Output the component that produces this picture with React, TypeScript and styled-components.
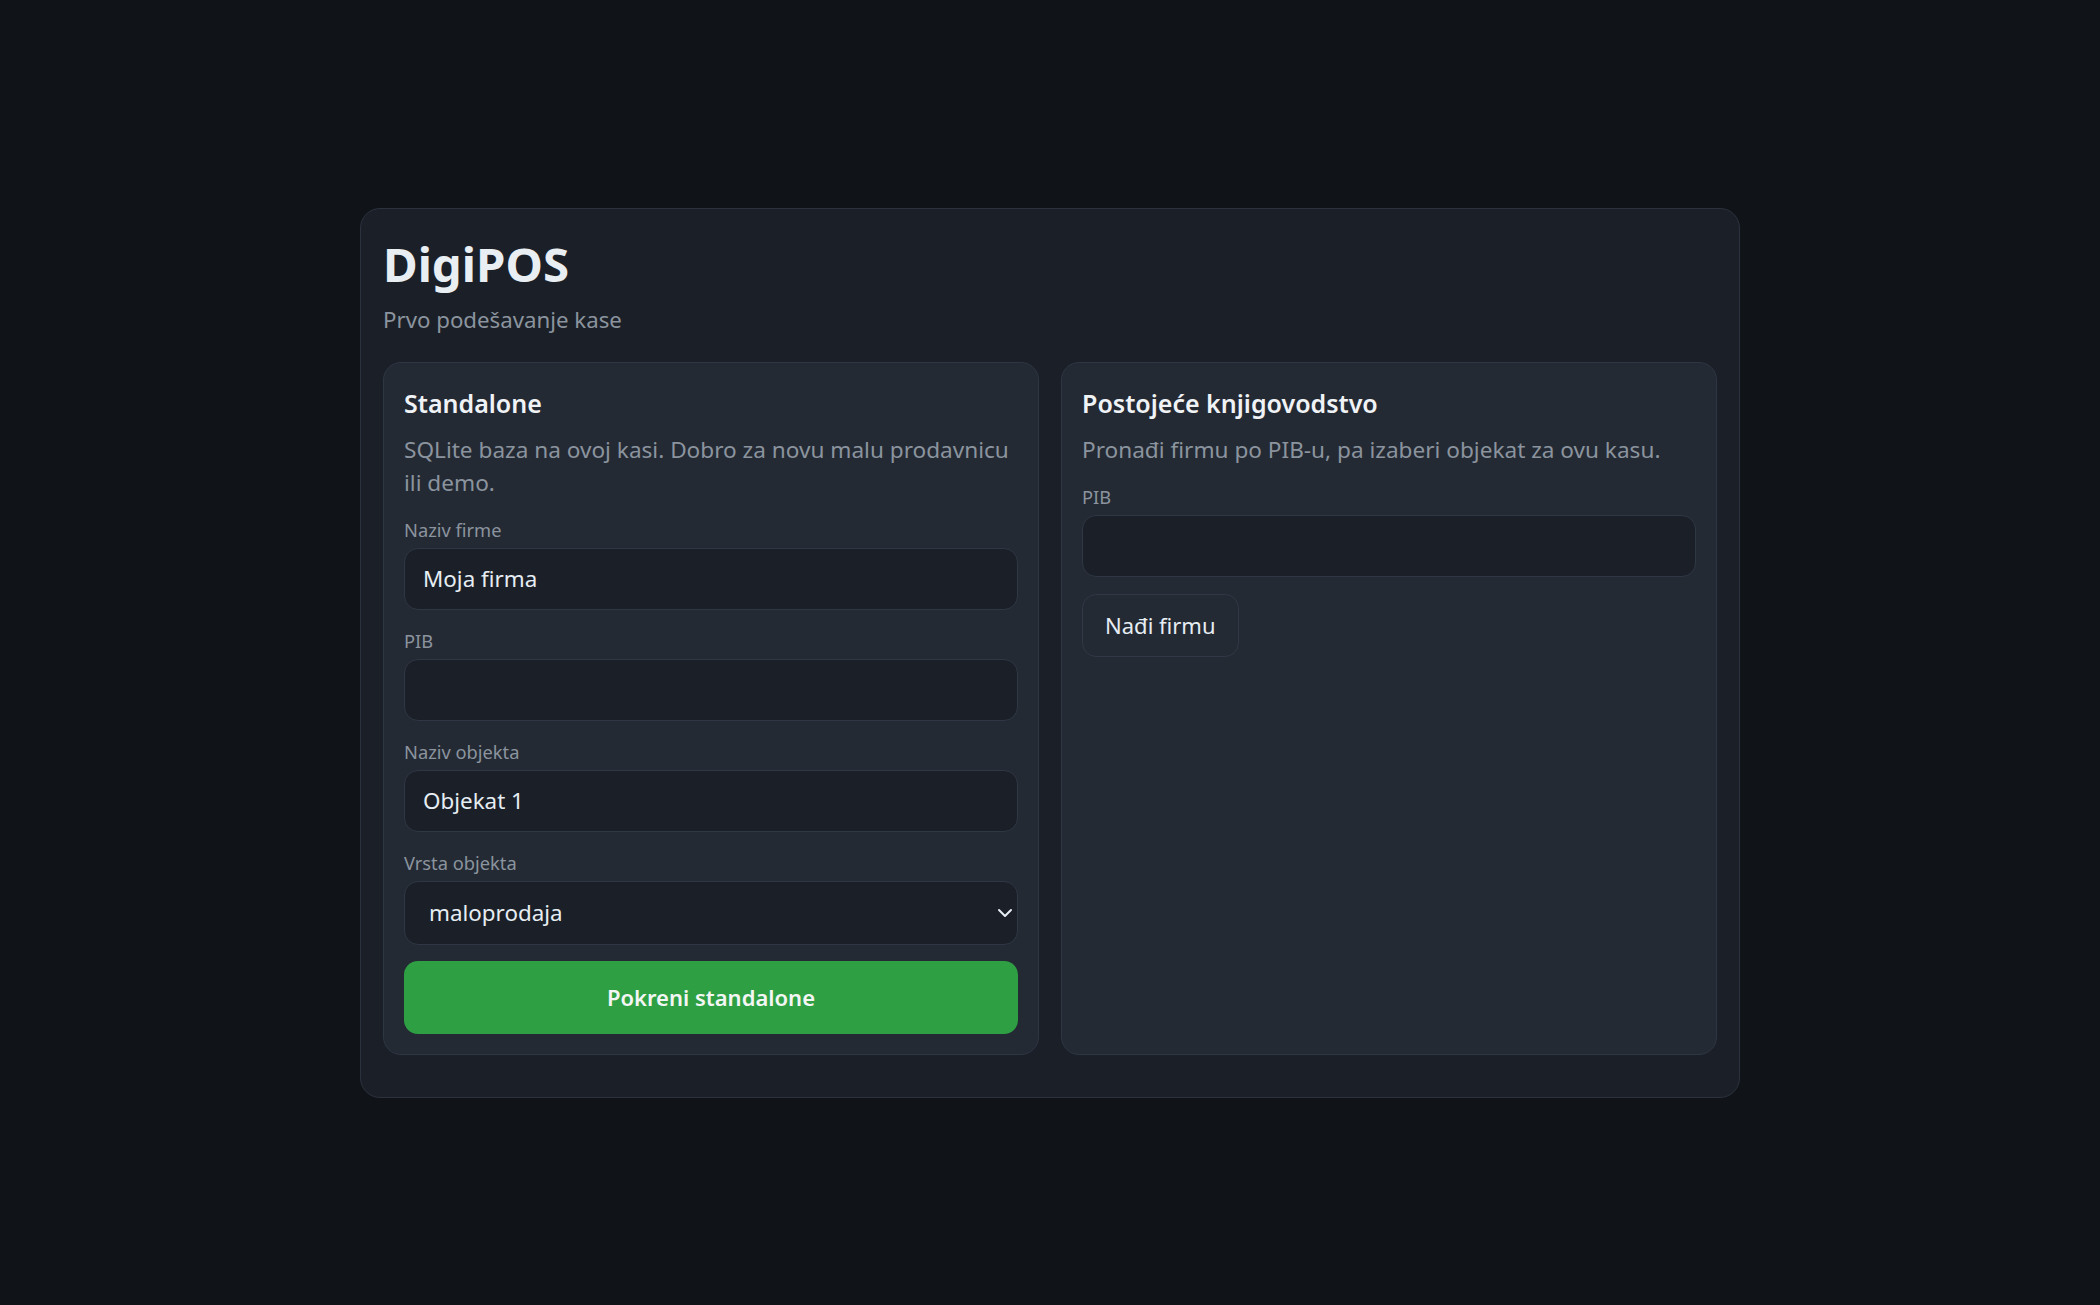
import styled, { createGlobalStyle } from 'styled-components';

const GlobalStyle = createGlobalStyle`
  * {
    box-sizing: border-box;
  }

  body {
    margin: 0;
    background: #101318;
    color: #e6edf3;
    font-family: "Noto Sans", "Open Sans", sans-serif;
  }
`;

const Screen = styled.div`
  min-height: 100vh;
  display: flex;
  align-items: center;
  justify-content: center;
`;

const Card = styled.div`
  width: 1380px;
  background: #1b2028;
  border: 1px solid #2b323d;
  border-radius: 20px;
  padding: 22px 22px 42px;
`;

const Title = styled.h1`
  margin: 4px 0 0;
  font-size: 47.4px;
  font-weight: 700;
  line-height: 57px;
  color: #e9eef3;
`;

const Subtitle = styled.p`
  margin: 12px 0 0;
  font-size: 22.25px;
  line-height: 31.5px;
  color: #8b949e;
`;

const Columns = styled.div`
  margin-top: 27px;
  display: grid;
  grid-template-columns: 1fr 1fr;
  gap: 22px;
`;

const Panel = styled.section`
  display: flex;
  flex-direction: column;
  background: #242a34;
  border: 1px solid #2f3643;
  border-radius: 18px;
  padding: 20px;
`;

const PanelTitle = styled.h2`
  margin: 4px 0 0;
  font-size: 25px;
  font-weight: 600;
  line-height: 32.5px;
  color: #f0f3f6;
`;

const PanelText = styled.p`
  margin: 13px 0 0;
  font-size: 22.6px;
  line-height: 33px;
  color: #8b949e;
`;

const Field = styled.label`
  display: flex;
  flex-direction: column;
  gap: 7px;
  margin-top: 19px;
`;

const FieldLabel = styled.span`
  font-size: 18.3px;
  line-height: 23px;
  color: #8b949e;
`;

const TextInput = styled.input`
  height: 62px;
  width: 100%;
  padding: 0 18px;
  background: #1b2028;
  border: 1px solid #2f3744;
  border-radius: 14px;
  color: #e6edf3;
  font-family: inherit;
  font-size: 22.4px;
  outline: none;
`;

const SelectWrap = styled.div`
  position: relative;
`;

const Select = styled.select`
  height: 64px;
  width: 100%;
  padding: 0 40px 0 24px;
  appearance: none;
  background: #1b2028;
  border: 1px solid #2f3744;
  border-radius: 14px;
  color: #e6edf3;
  font-family: inherit;
  font-size: 22.4px;
  outline: none;
`;

const Chevron = styled.svg`
  position: absolute;
  right: 5px;
  top: 50%;
  transform: translateY(-50%);
  pointer-events: none;
`;

const PrimaryButton = styled.button`
  margin-top: 16px;
  height: 73px;
  width: 100%;
  background: #2ea043;
  border: none;
  border-radius: 14px;
  color: #f3f6f4;
  font-family: inherit;
  font-size: 22px;
  font-weight: 600;
  cursor: pointer;
`;

const SecondaryButton = styled.button`
  align-self: flex-start;
  margin-top: 17px;
  height: 63px;
  padding: 0 22px;
  background: transparent;
  border: 1px solid #303846;
  border-radius: 14px;
  color: #e6edf3;
  font-family: inherit;
  font-size: 22px;
  cursor: pointer;
`;

export default function App() {
  return (
    <>
      <GlobalStyle />
      <Screen>
        <Card>
          <Title>DigiPOS</Title>
          <Subtitle>Prvo podešavanje kase</Subtitle>

          <Columns>
            <Panel>
              <PanelTitle>Standalone</PanelTitle>
              <PanelText>SQLite baza na ovoj kasi. Dobro za novu malu prodavnicu ili demo.</PanelText>

              <Field>
                <FieldLabel>Naziv firme</FieldLabel>
                <TextInput defaultValue="Moja firma" />
              </Field>
              <Field>
                <FieldLabel>PIB</FieldLabel>
                <TextInput defaultValue="" />
              </Field>
              <Field>
                <FieldLabel>Naziv objekta</FieldLabel>
                <TextInput defaultValue="Objekat 1" />
              </Field>
              <Field>
                <FieldLabel>Vrsta objekta</FieldLabel>
                <SelectWrap>
                  <Select defaultValue="maloprodaja">
                    <option value="maloprodaja">maloprodaja</option>
                    <option value="ugostiteljstvo">ugostiteljstvo</option>
                  </Select>
                  <Chevron width="16" height="10" viewBox="0 0 16 10" fill="none">
                    <path d="M2 2l6 6 6-6" stroke="#e6edf3" strokeWidth="2" strokeLinecap="round" strokeLinejoin="round" />
                  </Chevron>
                </SelectWrap>
              </Field>

              <PrimaryButton>Pokreni standalone</PrimaryButton>
            </Panel>

            <Panel>
              <PanelTitle>Postojeće knjigovodstvo</PanelTitle>
              <PanelText>Pronađi firmu po PIB-u, pa izaberi objekat za ovu kasu.</PanelText>

              <Field>
                <FieldLabel>PIB</FieldLabel>
                <TextInput defaultValue="" />
              </Field>

              <SecondaryButton>Nađi firmu</SecondaryButton>
            </Panel>
          </Columns>
        </Card>
      </Screen>
    </>
  );
}
